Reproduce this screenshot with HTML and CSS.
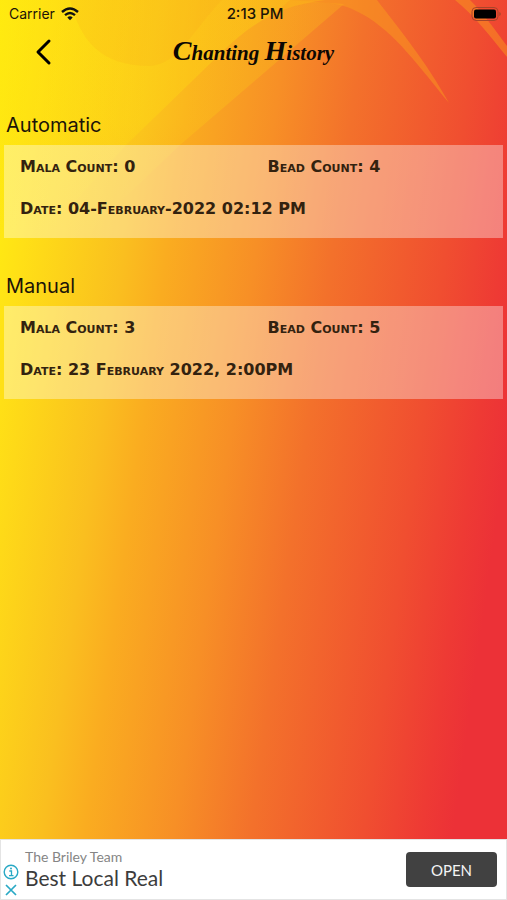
FILE: index.html
```html
<!DOCTYPE html>
<html lang="en">
<head>
  <meta charset="UTF-8">
  <meta name="viewport" content="width=device-width, initial-scale=1.0">
  <title>Chanting History</title>
  <link rel="stylesheet" href="styles.css">
</head>
<body>
  <div class="screen">
    <svg class="swoosh" viewBox="0 0 507 240" preserveAspectRatio="none" aria-hidden="true">
      <defs>
        <linearGradient id="fade" x1="0" y1="0" x2="0" y2="1">
          <stop offset="0.5" stop-color="#ffe010" stop-opacity="1"/>
          <stop offset="1" stop-color="#ffe010" stop-opacity="0"/>
        </linearGradient>
      </defs>
      <path d="M0 0H290L344 4L180 145L80 240H0Z" fill="url(#fade)" opacity=".2"/>
      <path d="M0 0H325C280 5 250 24 220 54L126 145L40 240H0Z" fill="url(#fade)" opacity=".3"/>
      <path d="M70 0C80 40 100 66 150 66C178 64 190 34 222 0Z" fill="#f59a1a" opacity=".14"/>
      <path d="M270 18C300 -2 335 -2 362 14C395 32 420 68 449 103C425 60 400 30 377 0H290Z" fill="#fba21c" opacity=".45"/>
      <path d="M455 0C475 16 490 36 507 57V46C495 30 484 14 470 0Z" fill="#fba21c" opacity=".45"/>
    </svg>

    <div class="status-bar">
      <div class="carrier">
        <span>Carrier</span>
        <svg width="18" height="14" viewBox="0 0 18 14" aria-hidden="true">
          <path d="M1 5Q9 -2 17 5" fill="none" stroke="#111" stroke-width="2.4"/>
          <path d="M4 8.2Q9 3.8 14 8.2" fill="none" stroke="#111" stroke-width="2.3"/>
          <path d="M6.3 10.4Q9 8.2 11.7 10.4L9 13.3Z" fill="#111"/>
        </svg>
      </div>
      <span class="time">2:13 PM</span>
      <svg class="battery" width="30" height="14" viewBox="0 0 30 14" aria-hidden="true">
        <rect x="1" y="0.5" width="26" height="13" rx="4" fill="none" stroke="#a8452a" stroke-width="1"/>
        <rect x="3" y="2.5" width="22" height="9" rx="2" fill="#000"/>
        <path d="M28.3 5V9Q29.8 8.4 29.8 7T28.3 5Z" fill="#a8452a"/>
      </svg>
    </div>

    <header class="nav-bar">
      <button class="back" type="button" aria-label="Back">
        <svg width="18" height="28" viewBox="0 0 18 28" aria-hidden="true">
          <path d="M14 3L3 14L14 25" fill="none" stroke="#000" stroke-width="3" stroke-linecap="round" stroke-linejoin="round"/>
        </svg>
      </button>
      <h1><span class="cap">C</span>hanting <span class="cap">H</span>istory</h1>
    </header>

    <main>
      <section>
        <h2>Automatic</h2>
        <div class="card">
          <span>Mala Count: 0</span>
          <span>Bead Count: 4</span>
          <span class="date">Date: 04-February-2022 02:12 PM</span>
        </div>
      </section>
      <section>
        <h2>Manual</h2>
        <div class="card">
          <span>Mala Count: 3</span>
          <span>Bead Count: 5</span>
          <span class="date">Date: 23 February 2022, 2:00PM</span>
        </div>
      </section>
    </main>

    <footer class="ad">
      <div class="ad-icons">
        <button type="button" aria-label="Ad info">
          <svg width="16" height="16" viewBox="0 0 16 16" aria-hidden="true">
            <circle cx="8" cy="8" r="6.8" fill="none" stroke="#29a9c5" stroke-width="1.4"/>
            <path d="M6.3 7H8.5V11.5M6 11.6H10.5" fill="none" stroke="#29a9c5" stroke-width="1.3"/>
            <circle cx="8" cy="4.5" r="1" fill="#29a9c5"/>
          </svg>
        </button>
        <button type="button" aria-label="Close ad">
          <svg width="16" height="16" viewBox="0 0 16 16" aria-hidden="true">
            <path d="M3 3L13 13M13 3L3 13" stroke="#29a9c5" stroke-width="1.7"/>
          </svg>
        </button>
      </div>
      <div class="ad-text">
        <span class="advertiser">The Briley Team</span>
        <span class="headline">Best Local Real</span>
      </div>
      <button class="open" type="button">OPEN</button>
    </footer>
  </div>
</body>
</html>
```
FILE: styles.css
```css
* {
  box-sizing: border-box;
}
body {
  margin: 0;
  font-family: Inter, "Liberation Sans", sans-serif;
  color: #1c1408;
}
button {
  padding: 0;
  border: none;
  background: none;
  cursor: pointer;
}
svg {
  display: block;
}
.screen {
  position: relative;
  display: flex;
  flex-direction: column;
  min-height: 100vh;
  background: linear-gradient(98deg, #fff30f 0%, #ffe016 9%, #fabf1f 25%, #faac20 32%, #f78f26 46%, #f3712b 58%, #f04e30 76%, #ee3a34 85%, #ec3137 90%);
}
/* decoration behind the header */
.swoosh {
  position: absolute;
  top: 0;
  left: 0;
  width: 100%;
  height: 240px;
}
.status-bar,
.nav-bar,
main {
  position: relative;
}
.status-bar {
  display: grid;
  grid-template-columns: 1fr auto 1fr;
  align-items: center;
  height: 27px;
  padding: 0 6px 0 9px;
  font-size: 14px;
}
.carrier {
  display: flex;
  align-items: center;
  gap: 6px;
}
.time {
  font-size: 15px;
  font-weight: 500;
}
.battery {
  justify-self: end;
}
.nav-bar {
  display: grid;
  grid-template-columns: 72px 1fr 72px;
  align-items: center;
  height: 50px;
}
.back {
  justify-self: center;
  padding-left: 16px;
}
h1 {
  margin: 0;
  font-family: "Liberation Serif", cursive;
  font-size: 21px;
  font-style: italic;
  font-weight: bold;
  line-height: 32px;
  text-align: center;
  color: #0c0703;
}
.cap {
  font-size: 28px;
}
main {
  flex: 1;
  padding: 32px 4px;
}
section {
  margin-bottom: 32px;
}
h2 {
  margin: 0;
  padding: 0 2px;
  font-size: 20px;
  font-weight: 400;
  line-height: 32px;
  margin-bottom: 4px;
}
.card {
  display: grid;
  grid-template-columns: 1fr 1fr;
  gap: 22px 12px;
  padding: 12px 0 19px 16px;
  background: rgba(255, 255, 255, 0.36);
  font-family: "DejaVu Sans", sans-serif;
  font-size: 16px;
  font-weight: bold;
  font-variant: small-caps;
  line-height: 20px;
  color: #33220f;
}
.date {
  grid-column: 1 / 3;
}
.ad {
  display: flex;
  align-items: center;
  height: 61px;
  padding: 0 9px 0 2px;
  background: #fff;
  border: 1px solid #e4e4e4;
}
.ad-icons {
  align-self: flex-end;
  display: grid;
  gap: 2px;
  margin-right: 6px;
  padding-bottom: 1px;
}
.ad-text {
  flex: 1;
  display: flex;
  flex-direction: column;
  font-family: Lato, sans-serif;
}
.advertiser {
  font-size: 14px;
  line-height: 16px;
  color: #858585;
}
.headline {
  font-size: 21px;
  line-height: 26px;
  color: #3c3c3c;
}
.open {
  width: 91px;
  height: 35px;
  border-radius: 4px;
  background: #414141;
  color: #f4f4f4;
  font-family: Lato, sans-serif;
  font-size: 15px;
}
```
